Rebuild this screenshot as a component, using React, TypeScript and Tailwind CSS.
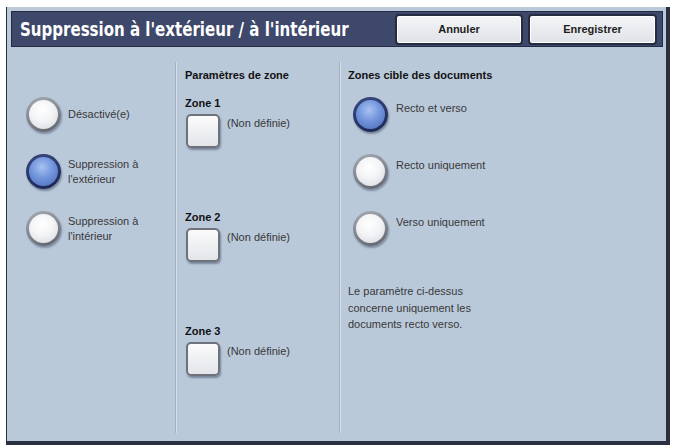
import React from "react";

const font = { fontFamily: '"Liberation Sans", Arial, sans-serif' };

function Radio({ on }: { on?: boolean }) {
  if (on) {
    return (
      <div className="w-[35px] h-[35px] shrink-0 rounded-full p-[3px] bg-[linear-gradient(160deg,#3a4a7e,#1a2452)] shadow-[1px_2px_2px_rgba(40,50,80,0.45)]">
        <div className="w-full h-full rounded-full bg-[radial-gradient(circle_at_45%_35%,#a9c2f2_0%,#7194dc_45%,#4a68b4_100%)]" />
      </div>
    );
  }
  return (
    <div className="w-[35px] h-[35px] shrink-0 rounded-full p-[3px] bg-[linear-gradient(160deg,#a7acb4,#5d6169)] shadow-[1px_2px_2px_rgba(40,50,80,0.4)]">
      <div className="w-full h-full rounded-full bg-[radial-gradient(circle_at_45%_35%,#ffffff_0%,#f3f4f6_45%,#d2d5db_100%)]" />
    </div>
  );
}

function Square() {
  return (
    <div className="w-[34px] h-[34px] shrink-0 rounded-[5px] border-2 border-[#6d727b] bg-[linear-gradient(180deg,#fbfbfc,#e3e5e9)] shadow-[1px_2px_2px_rgba(40,50,80,0.45)]" />
  );
}

function Button({ label }: { label: string }) {
  return (
    <div className="h-[31px] rounded-[4px] border-2 border-[#262c40] bg-[linear-gradient(180deg,#f4f5f7,#dfe2e7)] shadow-[inset_0_0_0_1px_#ffffff] flex items-center justify-center text-[11px] font-bold text-[#1d1d1d]">
      {label}
    </div>
  );
}

function Divider() {
  return (
    <div className="w-[2px] shrink-0 mt-[15px] mb-[8px] border-l border-[#a3b1c3] border-r border-r-[#d4dde8]" />
  );
}

function Zone({ n }: { n: number }) {
  return (
    <div className="h-[114px]">
      <div className="text-[11px] leading-[14px] font-bold text-[#111]">Zone {n}</div>
      <div className="mt-[4px] ml-[1px] flex items-start gap-[7px]">
        <Square />
        <div className="pt-[2px] text-[11px] leading-[14px] text-[#383838]">(Non définie)</div>
      </div>
    </div>
  );
}

export default function App() {
  return (
    <div className="w-[673px] h-[448px] bg-white pt-[7px] pl-[6px]" style={font}>
      <div className="w-[664px] h-[438px] bg-[#bac9da] border-l border-r-4 border-b-4 border-[#2b3040] flex flex-col">
        <div className="mt-[4px] ml-[4px] w-[652px] h-[36px] bg-[#3e486b] border border-[#252b44] flex items-center justify-between pr-[5px]">
          <div
            className="pl-[9px] text-white font-bold text-[19px] leading-none whitespace-nowrap origin-left scale-x-[0.88]"
            style={{ fontFamily: '"DejaVu Sans Condensed", "DejaVu Sans", sans-serif', fontStretch: "condensed" }}
          >
            Suppression à l'extérieur / à l'intérieur
          </div>
          <div className="flex gap-[5px]">
            <div className="w-[128px]">
              <Button label="Annuler" />
            </div>
            <div className="w-[129px]">
              <Button label="Enregistrer" />
            </div>
          </div>
        </div>

        <div className="flex h-[394px]">
          {/* Left column */}
          <div className="w-[168px] shrink-0 pt-[50px] pl-[19px] flex flex-col gap-[22px]">
            <div className="flex items-center gap-[7px]">
              <Radio />
              <div className="text-[11px] leading-[15px] text-[#383838]">Désactivé(e)</div>
            </div>
            <div className="flex items-center gap-[7px]">
              <Radio on />
              <div className="text-[11px] leading-[15px] text-[#383838]">
                Suppression à<br />l'extérieur
              </div>
            </div>
            <div className="flex items-center gap-[7px]">
              <Radio />
              <div className="text-[11px] leading-[15px] text-[#383838]">
                Suppression à<br />l'intérieur
              </div>
            </div>
          </div>

          <Divider />

          {/* Middle column */}
          <div className="w-[162px] shrink-0 pt-[21px] pl-[8px]">
            <div className="text-[11px] leading-[14px] font-bold text-[#111]">Paramètres de zone</div>
            <div className="mt-[14px]">
              <Zone n={1} />
              <Zone n={2} />
              <Zone n={3} />
            </div>
          </div>

          <Divider />

          {/* Right column */}
          <div className="flex-1 pt-[21px] pl-[7px]">
            <div className="text-[11px] leading-[14px] font-bold text-[#111]">Zones cible des documents</div>
            <div className="mt-[15px] pl-[5px] flex flex-col gap-[22px]">
              {["Recto et verso", "Recto uniquement", "Verso uniquement"].map((t, i) => (
                <div key={t} className="flex items-start gap-[8px]">
                  <Radio on={i === 0} />
                  <div className="pt-[4px] text-[11px] leading-[14px] text-[#383838]">{t}</div>
                </div>
              ))}
            </div>
            <div className="mt-[37px] text-[11px] leading-[16.5px] text-[#383838]">
              Le paramètre ci-dessus
              <br />
              concerne uniquement les
              <br />
              documents recto verso.
            </div>
          </div>
        </div>
      </div>
    </div>
  );
}
